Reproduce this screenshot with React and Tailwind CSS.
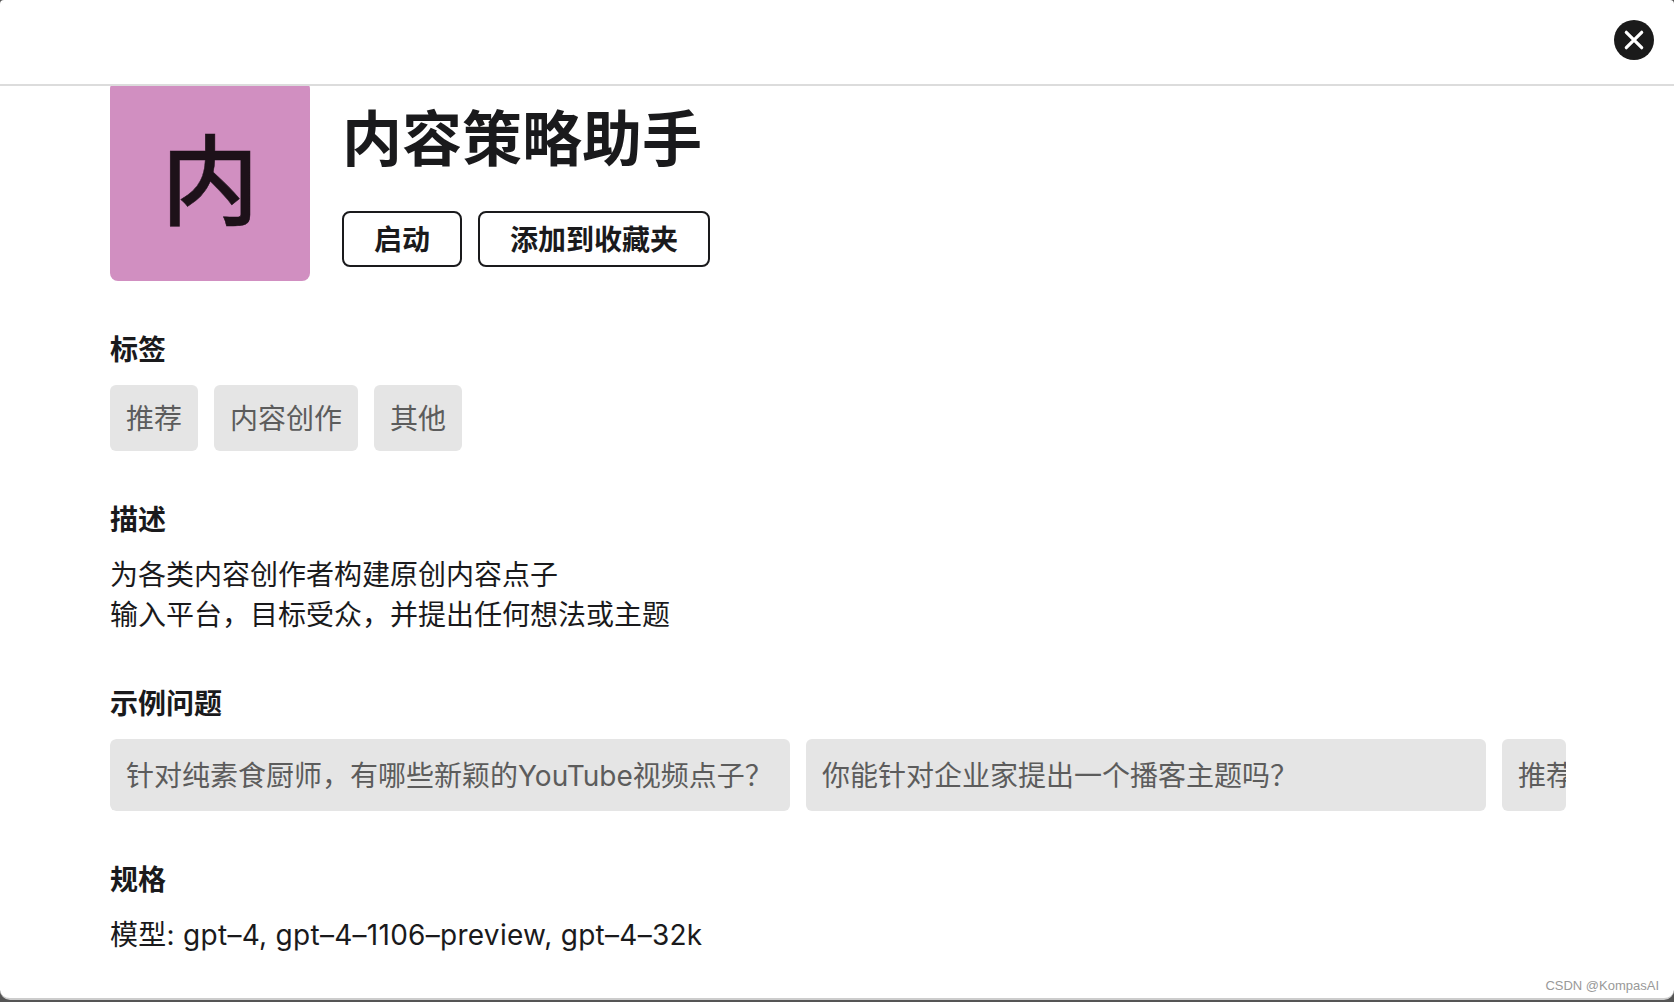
const tags = ["推荐", "内容创作", "其他"];

const questions = [
  "针对纯素食厨师，有哪些新颖的YouTube视频点子？",
  "你能针对企业家提出一个播客主题吗？",
  "推荐",
];

function Section({ title, children }) {
  return (
    <section>
      <h2 className="mb-[15px] pt-px text-[28px] leading-10 font-bold">{title}</h2>
      {children}
    </section>
  );
}

function ActionButton({ children }) {
  return (
    <button className="h-14 rounded-lg border-2 border-[#1a1a1c] px-[30px] pt-0.5 text-[28px] leading-10 font-bold">
      {children}
    </button>
  );
}

export default function App() {
  return (
    <div className="h-[1002px] w-[1674px] overflow-hidden bg-[#555] font-['Inter','Noto_Sans_CJK_SC',sans-serif] text-[#1a1a1c]">
      <div className="relative flex h-[1000px] flex-col overflow-hidden rounded-t-[4px] rounded-b-[10px] border-b-2 border-[#ccc] bg-white">
        <header className="flex h-[86px] shrink-0 items-start justify-end border-b-2 border-[#dcdcdc] pt-[19.5px] pr-5">
          <button className="flex size-10 items-center justify-center rounded-full bg-[#1a1a1a]">
            <svg viewBox="0 0 20 20" className="size-5" fill="none" stroke="white" strokeWidth="3.2" strokeLinecap="round">
              <path d="M2.3 2.3 17.7 17.7M17.7 2.3 2.3 17.7" />
            </svg>
          </button>
        </header>

        <main className="flex-1 overflow-hidden pr-[108px] pl-[110px]">
          {/* Content is scrolled slightly under the header */}
          <div className="-mt-[5px] flex flex-col gap-12">
            <div className="flex items-center gap-8">
              <div className="flex size-[200px] shrink-0 items-center justify-center rounded-lg bg-[#d18fc1] pt-0.5 text-[98px] leading-none font-medium text-[#1d1119] [-webkit-text-stroke:0.5px_#1d1119]">
                内
              </div>
              <div className="flex flex-col gap-8">
                <h1 className="h-[84px] pt-0.5 text-[60px] leading-[84px] font-bold">内容策略助手</h1>
                <div className="flex gap-4">
                  <ActionButton>启动</ActionButton>
                  <ActionButton>添加到收藏夹</ActionButton>
                </div>
              </div>
            </div>

            <Section title="标签">
              <div className="flex gap-4">
                {tags.map((tag) => (
                  <span key={tag} className="flex h-[66px] items-center rounded-md bg-[#e5e5e5] px-4 pt-0.5 text-[28px] text-[#5c5c5c]">
                    {tag}
                  </span>
                ))}
              </div>
            </Section>

            <Section title="描述">
              <p className="text-[28px] leading-10">
                为各类内容创作者构建原创内容点子
                <br />
                输入平台，目标受众，并提出任何想法或主题
              </p>
            </Section>

            <Section title="示例问题">
              <div className="flex gap-4 overflow-hidden rounded-md">
                {questions.map((q) => (
                  <div key={q} className="flex h-[72px] w-[680px] shrink-0 items-center rounded-md bg-[#e5e5e5] px-4 pt-0.5 text-[28px] text-[#5c5c5c]">
                    {q}
                  </div>
                ))}
              </div>
            </Section>

            <Section title="规格">
              <p className="text-[28px] leading-10 tracking-[0.28px]">模型: gpt–4, gpt–4–1106–preview, gpt–4–32k</p>
            </Section>
          </div>
        </main>

        <span className="absolute right-[15px] bottom-[2px] font-['Liberation_Sans',sans-serif] text-[13px] leading-5 text-[#999]">
          CSDN @KompasAI
        </span>
      </div>
    </div>
  );
}
